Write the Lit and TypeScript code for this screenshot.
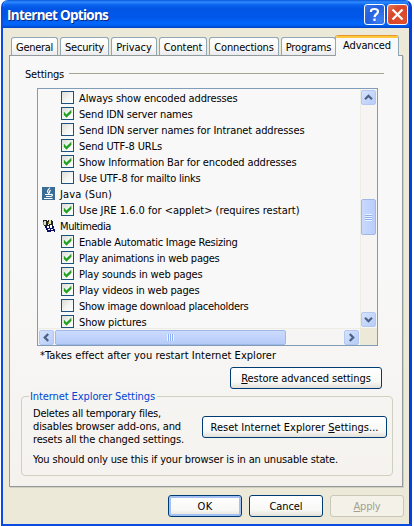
import { LitElement, html, css } from "lit";
import { customElement, property } from "lit/decorators.js";

/* Text run whose tracking is adjusted so that it spans a given width. */
@customElement("fit-text")
class FitText extends LitElement {
  @property({ type: Number }) span = 0;
  static styles = css`
    :host { display: inline-block; white-space: pre; flex: none; }
  `;
  render() { return html`<slot></slot>`; }
  firstUpdated() {
    const natural = this.getBoundingClientRect().width;
    const n = (this.textContent ?? "").length;
    const gap = (this.span + 1 - natural) / n;
    this.style.letterSpacing = `${gap.toFixed(3)}px`;
  }
}

const tabs = [
  ["General", 47, 36], ["Security", 49, 38], ["Privacy", 46, 34.5], ["Content", 48, 37.5],
  ["Connections", 70, 58.5], ["Programs", 55, 44.5], ["Advanced", 64, 47],
] as const;

type Row = { t: string; w: number; on?: boolean; icon?: "java" | "media" };
const rows: Row[] = [
  { t: "Always show encoded addresses", w: 157.5, on: false },
  { t: "Send IDN server names", w: 112.5, on: true },
  { t: "Send IDN server names for Intranet addresses", w: 224.5, on: false },
  { t: "Send UTF-8 URLs", w: 82, on: true },
  { t: "Show Information Bar for encoded addresses", w: 216.5, on: true },
  { t: "Use UTF-8 for mailto links", w: 120.5, on: false },
  { t: "Java (Sun)", w: 51, icon: "java" },
  { t: "Use JRE 1.6.0 for <applet> (requires restart)", w: 219.5, on: true },
  { t: "Multimedia", w: 50, icon: "media" },
  { t: "Enable Automatic Image Resizing", w: 157.5, on: true },
  { t: "Play animations in web pages", w: 139.5, on: true },
  { t: "Play sounds in web pages", w: 122.5, on: true },
  { t: "Play videos in web pages", w: 119.5, on: true },
  { t: "Show image download placeholders", w: 168.5, on: false },
  { t: "Show pictures", w: 66.5, on: true },
];

const java = html`<svg class="ico java" width="13" height="13" viewBox="0 0 13 13">
  <rect width="13" height="13" fill="#3b6c93"/>
  <path d="M7.500 .5C8 2 5 3 5.500 4.500S7 6 6.500 7M8.500 3C7 4.500 7 5 7.500 6.500" fill="none" stroke="#f0f5f9" stroke-width="1.200"/>
  <path d="M3 7.500h6M4 9.500h5M9 7.500c2-.5 2 1 0 2M2 11.500h8.500" fill="none" stroke="#fff" stroke-width="1.100"/>
</svg>`;
const media = html`<svg class="ico" width="14" height="14" viewBox="0 0 14 14" shape-rendering="crispEdges">
  <path d="M1 1h4v1h1v4h1v1H2V6H1zM6 1h4v1h1v5H7V5H6z" fill="#222"/>
  <path d="M2 2h2v4H2zM7 1h2v4H7z" fill="#e2e0b8"/>
  <path d="M1 3h1v3H1zM6 3h1v2H6z" fill="#8a8a30"/>
  <path d="M3 7h9v3h1v3H5v-2H4V9H3z" fill="#101060"/>
  <path d="M5 7h2v2H5zM8 6h2v3H8zM6 10h2v1H6zM9 10h2v1H9zM9 12h3v1H9z" fill="#fff"/>
  <path d="M7 9h1v1H7zM11 9h1v1h-1z" fill="#2a50d0"/>
</svg>`;

const chev = (d: string) => html`<svg width="15" height="15" viewBox="0 0 15 15">
  <path d=${d} fill="none" stroke="#4d6185" stroke-width="2.600"/></svg>`;

@customElement("app-root")
class AppRoot extends LitElement {
  static styles = css`
    :host { display: block; width: 414px; height: 526px; overflow: hidden; background: #fff;
      font: 11px/16px "DejaVu Sans Condensed", "Noto Sans", sans-serif; color: #000; }
    * { box-sizing: border-box; }
    .window { width: 411px; height: 526px; margin-left: 1px; background: #ece9d8;
      border: solid #0a4be0; border-width: 0 3px 2px 2px; border-right-color: #0440dc; border-radius: 7px 7px 0 0; overflow: hidden; }
    .title { height: 28px; margin: 0 -3px 0 -2px; padding: 1px 4px 0 6px; display: flex; align-items: center;
      background: linear-gradient(#0a55d8 0, #2e8bff 2px, #0a63ee 5px, #0055e5 9px, #0058ea 18px, #0266fa 23px, #0063f4 25px, #0042c4 28px); }
    .title .name { flex: 1; display: flex; }
    .title fit-text { font: bold 13.5px/16px "Open Sans", sans-serif; color: #fff; text-shadow: 1px 1px #0a2a80; }
    .cap { width: 21px; height: 21px; border: 1px solid #fff; border-radius: 3px; margin-left: 2px; display: flex; }
    .help { background: radial-gradient(circle at 80% 80%, #3c80f5, #2460dd 60%, #3b78e8); }
    .close { background: radial-gradient(circle at 80% 80%, #e0502a, #d8472a 60%, #e77c5c); }
    .body { padding: 7px 7px 0 6px; }
    .tabs { display: flex; align-items: flex-end; height: 20px; padding-left: 2px; gap: 2px; }
    .tab { height: 18px; border: 1px solid #91a7b4; border-bottom: 0; border-radius: 3px 3px 0 0;
      background: linear-gradient(#fff, #f8f8f6 60%, #ebeaf0); display: flex; justify-content: center; padding-top: 2px; flex: none; }
    .tab.active { height: 21px; background: #f8f8f8; border-top: 0; margin: 0 0 -1px -3px; padding-top: 3px; position: relative; overflow: hidden; }
    .tab.active::before { content: ""; position: absolute; left: -1px; right: -1px; top: 0; height: 3px;
      background: linear-gradient(#e5972d 1px, #ffc73c 1px); }
    .panel { width: 394px; height: 432px; border: 1px solid #919b9c; box-shadow: 1px 1px #d3cfbf;
      background: linear-gradient(#f8f8f8 0, #f8f8f8 50%, #f5f2ee 100%); }
    .head { display: flex; align-items: flex-start; padding: 11px 18px 0 15px; height: 26px; gap: 5px; }
    .head i { flex: 1; height: 1px; background: #a5a594; margin-top: 6px; }
    .list { margin: 6px 0 0 27px; width: 341px; height: 258px; border: 1px solid #7f9db9;
      display: grid; grid-template: 239px 17px / 322px 17px; }
    .rows { overflow: hidden; padding-top: 1px; background: #f8f8f8; }
    .row { display: flex; align-items: flex-start; height: 16px; padding: 1px 0 0 23px; gap: 5px; }
    .row.group { padding-left: 4px; gap: 4px; }
    .java { margin-right: 1px; }
    .check { width: 13px; height: 13px; border: 1px solid #1c5180; flex: none; display: flex;
      background: linear-gradient(135deg, #dcdcd7, #f3f3ef 50%, #fff); }
    .ico { flex: none; }
    .bar { display: flex; background: #f7f5f3; }
    .v { flex-direction: column; align-items: center; border-left: 1px solid #eeede5; padding: 1px 1px 1px 0; }
    .h { align-items: center; border-top: 1px solid #eeede5; padding-left: 1px; }
    .sb { width: 15px; height: 15px; flex: none; border-radius: 2px; background: linear-gradient(135deg, #d6e3fe, #b5cbf8);
      border: 1px solid #b4c8f0; display: flex; align-items: center; justify-content: center; overflow: hidden; }
    .thumb { background: #c3d5fd; border: 1px solid #9fb8e8; border-radius: 2px; display: flex; align-items: center; justify-content: center; }
    .v .thumb { width: 15px; height: 36px; margin-top: 94px; background: linear-gradient(90deg, #c9d9fe, #b9cdfa); }
    .v .sb:last-child { margin-top: auto; }
    .h .thumb { height: 15px; width: 231px; margin-left: 1px; background: linear-gradient(#cbdbfe, #b6cbf9); }
    .h .sb:last-child { margin-left: auto; margin-right: 1px; }
    .grip { width: 7px; height: 7px; }
    .v .grip { background: repeating-linear-gradient(#eef4fe 0 1px, #8cb0f8 1px 2px); }
    .h .grip { background: repeating-linear-gradient(90deg, #eef4fe 0 1px, #8cb0f8 1px 2px); }
    .corner { background: #ece9d8; }
    .note { padding: 2px 0 0 30px; height: 21px; display: flex; }
    .btn { height: 22px; border: 1px solid #003c74; border-radius: 3px; display: flex; justify-content: center; padding-top: 3px;
      background: linear-gradient(#fff, #f8f8f6 70%, #e4e0d8); flex: none; }
    .restore { width: 152px; margin-left: 220px; }
    u { text-underline-offset: 1px; text-decoration-thickness: 1px; }
    .group-box { position: relative; margin: 7px 0 0 11px; width: 372px; height: 80px; border: 1px solid #d0d0bf; border-radius: 4px; padding: 10px 5px 0 11px; }
    .legend { position: absolute; left: 7px; top: -8px; background: #f6f4f1; color: #0046d5; padding: 0 2px 0 1px; display: flex; }
    .reset-row { display: flex; justify-content: space-between; }
    .desc { line-height: 13px; display: flex; flex-direction: column; align-items: flex-start; }
    .reset { width: 185px; margin-top: 9px; }
    .warn { display: flex; margin-top: 6px; }
    .footer { display: flex; justify-content: flex-end; gap: 7px; padding: 8px 0 0; width: 395px; }
    .footer .btn { width: 74px; }
    .ok { box-shadow: inset 0 0 0 2px #a5c1f2; }
    .footer .off { border-color: #c9c7ba; background: #f3f1e8; color: #a1a192; }
  `;
  row(r: Row) {
    return html`<div class="row ${r.icon ? "group" : ""}">
      ${r.icon ? (r.icon === "java" ? java : media) : html`<span class="check">${r.on
        ? html`<svg width="11" height="11" viewBox="0 0 11 11"><path d="M2 4v3l2.500 2.500L9.200 5V2L4.500 6.500z" fill="#21a121" stroke="#21a121" stroke-width=".3"/></svg>` : ""}</span>`}
      <fit-text .span=${r.w}>${r.t}</fit-text></div>`;
  }
  render() {
    return html`<div class="window">
      <div class="title">
        <div class="name"><fit-text .span=${100}>Internet Options</fit-text></div>
        <div class="cap help"><svg width="19" height="19" viewBox="0 0 19 19"><path d="M6 7V6q0-2 3.500-2T13 6.500q0 1.500-1.500 2.500T9.500 12M9.500 13.500v2.500" fill="none" stroke="#fff" stroke-width="2.200"/></svg></div>
        <div class="cap close"><svg width="19" height="19" viewBox="0 0 19 19"><path d="M4.500 4.500l10 10M14.500 4.500l-10 10" stroke="#fff" stroke-width="2.200"/></svg></div>
      </div>
      <div class="body">
        <div class="tabs">${tabs.map(([t, w, s], i) => html`<div class="tab ${i === 6 ? "active" : ""}" style="width:${w}px"><fit-text .span=${s}>${t}</fit-text></div>`)}</div>
        <div class="panel">
          <div class="head"><fit-text .span=${38}>Settings</fit-text><i></i></div>
          <div class="list">
            <div class="rows">${rows.map((r) => this.row(r))}</div>
            <div class="bar v"><div class="sb">${chev("M3.500 9.500l4-4 4 4")}</div><div class="thumb"><div class="grip"></div></div><div class="sb">${chev("M3.500 5.500l4 4 4-4")}</div></div>
            <div class="bar h"><div class="sb">${chev("M9.500 3.500l-4 4 4 4")}</div><div class="thumb"><div class="grip"></div></div><div class="sb">${chev("M5.500 3.500l4 4-4 4")}</div></div>
            <div class="corner"></div>
          </div>
          <div class="note"><fit-text .span=${235}>*Takes effect after you restart Internet Explorer</fit-text></div>
          <div class="btn restore"><fit-text .span=${128.5}><u>R</u>estore advanced settings</fit-text></div>
          <div class="group-box">
            <div class="legend"><fit-text .span=${124}>Internet Explorer Settings</fit-text></div>
            <div class="reset-row">
              <div class="desc">
                <fit-text .span=${127}>Deletes all temporary files,</fit-text>
                <fit-text .span=${147}>disables browser add-ons, and</fit-text>
                <fit-text .span=${150}>resets all the changed settings.</fit-text>
              </div>
              <div class="btn reset"><fit-text .span=${167}>Reset Internet Explorer <u>S</u>ettings...</fit-text></div>
            </div>
            <div class="warn"><fit-text .span=${304}>You should only use this if your browser is in an unusable state.</fit-text></div>
          </div>
        </div>
        <div class="footer">
          <div class="btn ok"><fit-text .span=${14}>OK</fit-text></div>
          <div class="btn"><fit-text .span=${32}>Cancel</fit-text></div>
          <div class="btn off"><fit-text .span=${26}><u>A</u>pply</fit-text></div>
        </div>
      </div>
    </div>`;
  }
}
